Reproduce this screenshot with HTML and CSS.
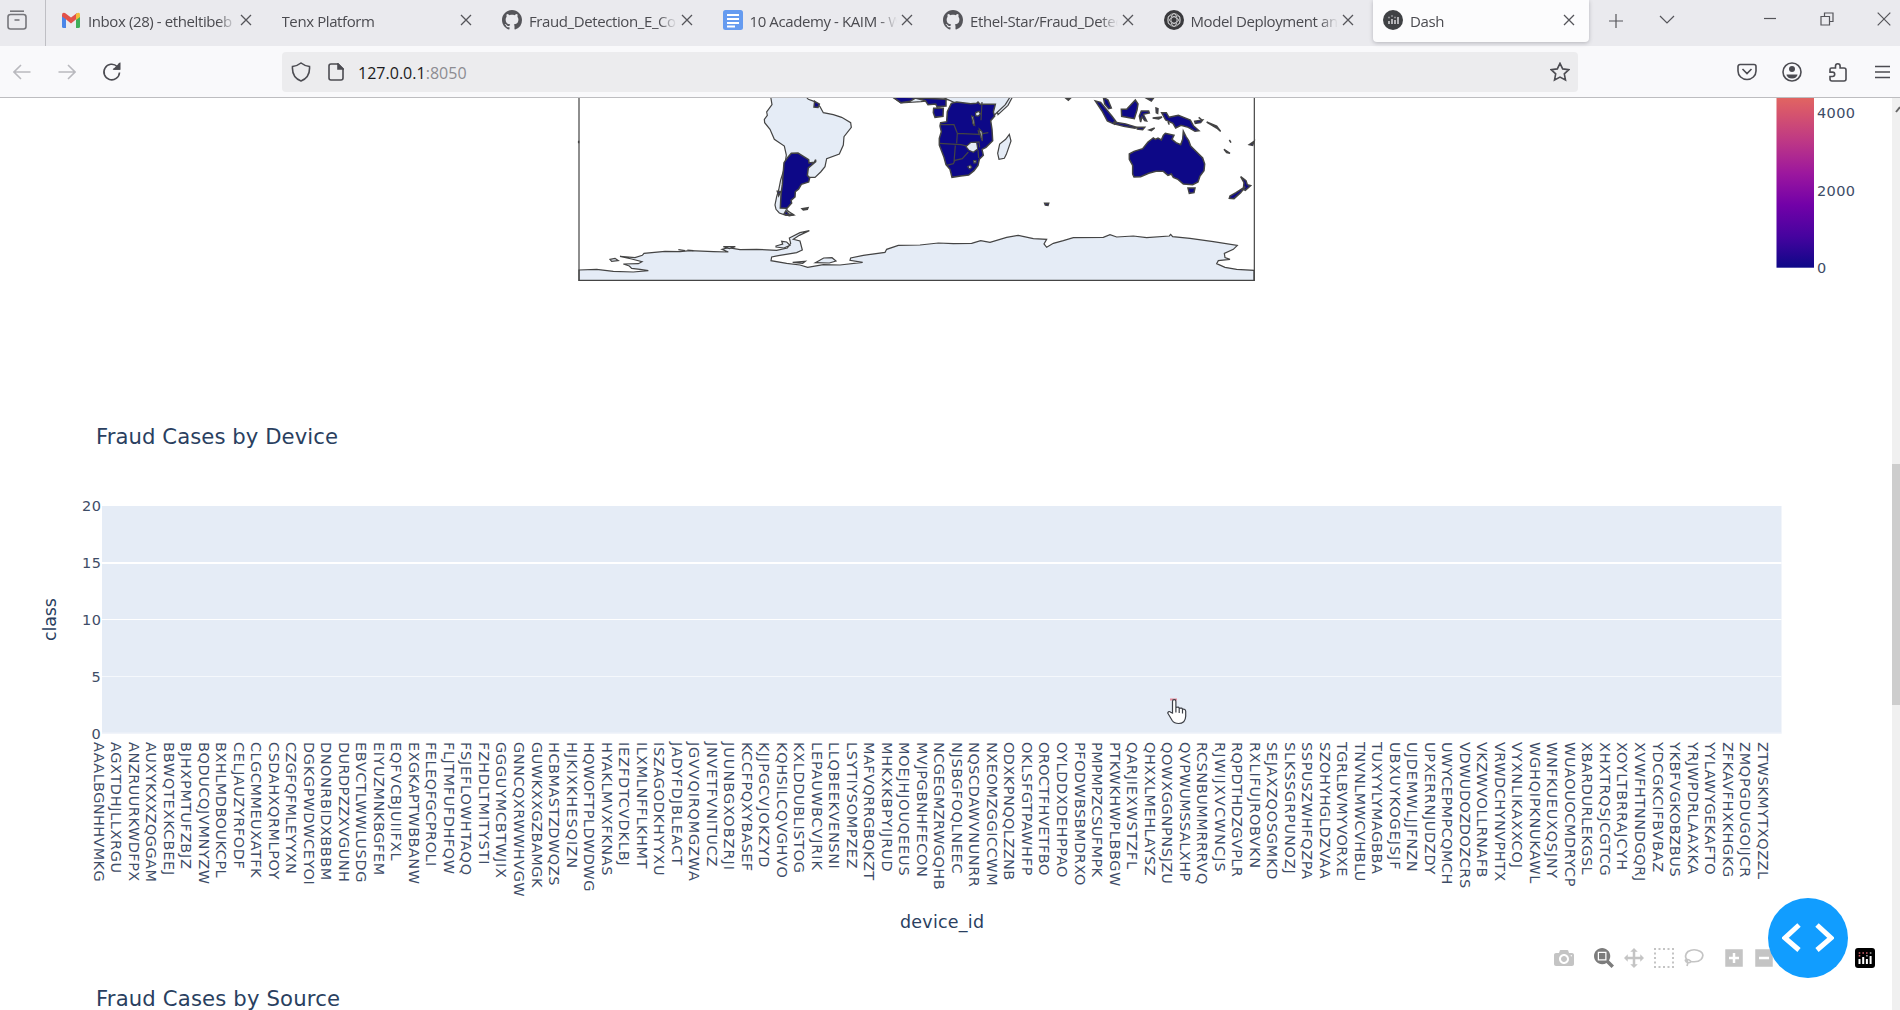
FILE: index.html
```html
<!DOCTYPE html>
<html lang="en">
<head>
<meta charset="utf-8">
<title>Dash</title>
<link rel="stylesheet" href="styles.css">
</head>
<body>
<svg width="0" height="0" class="defs">
  <symbol id="close" viewBox="0 0 12 12"><path d="M1 1l10 10M11 1L1 11" stroke="currentColor" stroke-width="1.3" fill="none"/></symbol>
  <symbol id="github" viewBox="0 0 16 16"><path fill="#55555a" d="M8 0C3.58 0 0 3.58 0 8c0 3.54 2.29 6.53 5.47 7.59.4.07.55-.17.55-.38 0-.19-.01-.82-.01-1.49-2.01.37-2.53-.49-2.69-.94-.09-.23-.48-.94-.82-1.13-.28-.15-.68-.52-.01-.53.63-.01 1.08.58 1.23.82.72 1.21 1.87.87 2.33.66.07-.52.28-.87.51-1.07-1.78-.2-3.64-.89-3.64-3.95 0-.87.31-1.59.82-2.15-.08-.2-.36-1.02.08-2.12 0 0 .67-.21 2.2.82.64-.18 1.32-.27 2-.27s1.36.09 2 .27c1.53-1.04 2.2-.82 2.2-.82.44 1.1.16 1.92.08 2.12.51.56.82 1.27.82 2.15 0 3.07-1.87 3.75-3.65 3.95.29.25.54.73.54 1.48 0 1.07-.01 1.93-.01 2.2 0 .21.15.46.55.38A8.01 8.01 0 0016 8c0-4.42-3.58-8-8-8z"/></symbol>
</svg>

<header class="browser">
  <div class="tabbar">
    <div class="recent">
      <svg width="20" height="20" viewBox="0 0 20 20" fill="none" stroke="#76767b" stroke-width="1.6"><path d="M3 1.2h14"/><rect x="1" y="4.5" width="18" height="14.5" rx="2.5"/><path d="M7.5 10h5"/></svg>
    </div>
    <div class="tab">
      <svg class="favicon" viewBox="0 0 20 20"><path fill="#4a86e8" d="M1 5l4 3v10H2.5Q1 18 1 16.500z"/><path fill="#3fae5a" d="M19 5l-4 3v10h2.500Q19 18 19 16.500z"/><path fill="#e2524a" d="M1 5q0-3 3-2l6 4.500L16 3v5.500l-6 5-6-5-3-2z"/><path fill="#f2bd3b" d="M15 4q4-3 4 1v2l-4 3z"/></svg>
      <span class="label">Inbox (28) - etheltibeb</span><svg class="x"><use href="#close"/></svg>
    </div>
    <div class="tab">
      <span class="label">Tenx Platform</span><svg class="x"><use href="#close"/></svg>
    </div>
    <div class="tab">
      <svg class="favicon"><use href="#github"/></svg>
      <span class="label">Fraud_Detection_E_Co</span><svg class="x"><use href="#close"/></svg>
    </div>
    <div class="tab">
      <svg class="favicon" viewBox="0 0 20 20"><rect width="20" height="20" rx="2.5" fill="#659bf0"/><path d="M4 5h12M4 9h12M4 13h12M4 16.500h8" stroke="#fff" stroke-width="1.800"/></svg>
      <span class="label">10 Academy - KAIM - W</span><svg class="x"><use href="#close"/></svg>
    </div>
    <div class="tab">
      <svg class="favicon"><use href="#github"/></svg>
      <span class="label">Ethel-Star/Fraud_Detec</span><svg class="x"><use href="#close"/></svg>
    </div>
    <div class="tab">
      <svg class="favicon" viewBox="0 0 20 20"><circle cx="10" cy="10" r="10" fill="#3a3a3d"/><g fill="none" stroke="#c9c9cb" stroke-width=".9"><ellipse cx="10" cy="10" rx="3" ry="6.500"/><ellipse cx="10" cy="10" rx="3" ry="6.500" transform="rotate(60 10 10)"/><ellipse cx="10" cy="10" rx="3" ry="6.500" transform="rotate(120 10 10)"/><circle cx="10" cy="10" r="6.300"/></g></svg>
      <span class="label">Model Deployment an</span><svg class="x"><use href="#close"/></svg>
    </div>
    <div class="tab active">
      <svg class="favicon" viewBox="0 0 20 20"><circle cx="10" cy="10" r="10" fill="#3f4144"/><path d="M6 14v-3M9 14V9M12 14v-4M15 14V7" stroke="#c7c7ca" stroke-width="1.700"/><path d="M5 7.500h2M8 6h2M11 7.500h2" stroke="#8f8f93" stroke-width="1.500"/></svg>
      <span class="label">Dash</span><svg class="x"><use href="#close"/></svg>
    </div>
    <svg class="winbtn plus" width="16" height="16" viewBox="0 0 16 16"><path d="M8 1v14M1 8h14"/></svg>
    <svg class="winbtn chevron" width="16" height="10" viewBox="0 0 16 10"><path d="M1 1l7 7 7-7"/></svg>
    <svg class="winbtn minimize" width="12" height="12" viewBox="0 0 12 12"><path d="M0 5.500h12"/></svg>
    <svg class="winbtn restore" width="14" height="14" viewBox="0 0 14 14"><path d="M1 4.500h8.500V13H1zM4.500 4V1H13v8.500H10"/></svg>
    <svg class="winbtn quit" width="14" height="14" viewBox="0 0 14 14"><path d="M.7.7l12.600 12.600M13.300.7L.7 13.300"/></svg>
  </div>

  <div class="navbar">
    <svg class="nav off" width="18" height="16" viewBox="0 0 18 16"><path d="M17.500 8H1M8 1L1 8l7 7"/></svg>
    <svg class="nav off fwd" width="18" height="16" viewBox="0 0 18 16"><path d="M.5 8H17M10 1l7 7-7 7"/></svg>
    <svg class="nav reload" width="20" height="20" viewBox="0 0 20 20"><path d="M17.500 10.500a7.800 7.800 0 1 1-2.300-6M17.500 1v6h-6"/><path d="M17.500 2v5h-5z" fill="#4c4c52"/></svg>
    <div class="url">
      <svg width="20" height="20" viewBox="0 0 20 20"><path d="M10 1c2.500 2 5 3 8.500 3.500C19 11 16 16.500 10 19 4 16.500 1 11 1.500 4.500 5 4 7.500 3 10 1z"/></svg>
      <svg class="doc" width="16" height="18" viewBox="0 0 16 18"><path d="M3 1h7l5 5v9a2 2 0 0 1-2 2H3a2 2 0 0 1-2-2V3a2 2 0 0 1 2-2z"/><path d="M10 1v5h5z" fill="#4c4c52"/></svg>
      <span class="address">127.0.0.1<i>:8050</i></span>
      <svg class="star" width="20" height="20" viewBox="0 0 20 20"><path d="M10 1.300l2.700 5.600 6.100.8-4.500 4.200 1.200 6.100L10 15.100 4.500 18l1.200-6.100L1.200 7.700l6.100-.8z"/></svg>
    </div>
    <svg class="tool" width="20" height="18" viewBox="0 0 20 18"><path d="M3 1.500h14a2 2 0 0 1 2 2V8a9 8.500 0 0 1-18 0V3.500a2 2 0 0 1 2-2zM5.500 6L10 10.500 14.500 6"/></svg>
    <svg class="tool user" width="20" height="20" viewBox="0 0 20 20"><circle cx="10" cy="10" r="9"/><circle cx="10" cy="7" r="3" fill="#4c4c52" stroke="none"/><path d="M4.500 12.500h11a5.500 4 0 0 1-11 0z" fill="#4c4c52" stroke="none"/></svg>
    <svg class="tool puzzle" width="18" height="20" viewBox="0 0 18 20"><path d="M1 7.500Q1 6 2.500 6h4V4a2.300 2.300 0 0 1 4.600 0v2H15q2 0 2 2v9q0 2-2 2H3q-2 0-2-2v-2.500h2.500a2.200 2.200 0 0 0 0-4.400H1z"/></svg>
    <svg class="tool menu" width="15" height="14" viewBox="0 0 15 14"><path d="M0 1.500h15M0 7h15M0 12.500h15"/></svg>
  </div>
</header>

<main class="page">
  <section class="figures">
    <svg class="figure" width="1892" height="300" viewBox="0 98 1892 300">
      <defs>
        <linearGradient id="plasma" gradientUnits="userSpaceOnUse" x1="0" y1="268" x2="0" y2="79">
          <stop offset="0" stop-color="#0d0887"/><stop offset=".1667" stop-color="#46039f"/><stop offset=".3333" stop-color="#7201a8"/>
          <stop offset=".5" stop-color="#9c179e"/><stop offset=".6667" stop-color="#bd3786"/><stop offset=".8333" stop-color="#d8576b"/><stop offset="1" stop-color="#ed7953"/>
        </linearGradient>
      </defs>
      <g class="map" transform="translate(570 90) scale(.33333)">
        <path class="land" d="M27 540L80 538 130 544 190 546 235 542 210 538 185 535 178 528 160 522 205 521 216 515 185 507 150 499 195 503 217 496 222 490 285 484 330 485 360 482 430 485 475 486 456 478 475 473 510 479 560 478 620 481 652 474 662 460 658 444 690 428 718 422 688 436 670 448 690 453 697 480 680 488 625 497 605 501 603 512 650 520 690 525 713 532 760 524 810 525 878 517 840 511 842 504 880 496 945 487 950 478 985 466 1050 465 1105 459 1150 461 1205 460 1232 452 1260 457 1310 442 1345 436 1390 446 1430 448 1422 462 1430 472 1450 460 1480 452 1510 443 1600 442 1620 434 1640 441 1690 438 1730 443 1798 438 1802 433 1808 440 1860 445 1930 455 2002 466 1990 478 1963 490 1965 503 1980 508 1945 512 1940 521 1965 532 2000 538 2052 541V571H27z"/>
        <path class="land" d="M120 508l15-3 10 7-20 2zM736 518l25-14 25-1 12 10-20 6zM668 517l38-3-8 6zM618 468l20-6-3-8 15 2 10 10-18 8-24-3zM460 470l36 0-18 6zM325 479l20 3M352 480l18 2"/>
        <path class="land" d="M602 20L606 44 590 66 592 76 583 88 584 98 600 118 613 148 643 168 649 195 643 235 632 270 626 300 620 320 615 345 618 358 628 369 648 376 672 375 655 364 648 355 640 350 700 270 716 262 735 262 752 246 765 230 770 206 808 192 820 165 822 140 844 112 842 98 815 82 790 74 760 68 750 50 732 34 715 28 708 20z"/>
        <path class="data" d="M664 190l20-1 32 20 1 10 16-2 4-8 0 6-22 19-3 22 7 8-3 12-22 7-8 14-10 8-1 16-12 10 2 8-14 16-20-1 2-40 4-30 5-66 13-18z"/>
        <path class="data" d="M734 34l14 8-4 10-12-1zM648 362l8 10 16 2-14 3-16-5zM696 356l18-3-2 5-12 2zM622 304l10 1-6 12zM583 20h12M26 152v8"/>
        <path class="land" d="M968 22l25 17 60-4 50-5 7 20 20-26 200-8-16 30-30 28-10-40z"/>
        <g transform="translate(990 0)">
          <path class="land" d="M120 18h212l-16 26-36 34-50-10zM328 133l5 20-14 40-6 12-16 3-4-18 6-28 18-14z"/>
          <path class="data" d="M-22 20l24 18 28-4 16-10 30 8 8 12 23-2 4 8 27-2 0-20zM101 55l29 0-1 24-24 3-5-14z"/>
          <path class="data" d="M122 98L140 95 142 65 154 40 170 36 212 41 230 40 234 36 240 43 286 43 280 66 284 78 272 92 276 118 278 152 258 172 246 178 250 196 238 208 234 226 222 242 206 255 182 258 156 262 150 238 138 224 132 202 118 165 118 145 124 125 120 108z"/>
          <path class="borders" d="M120 104l42 0 10 26 66 3M118 160l65 4 18 4 16-10 20-2 2 16M172 130l-2 30M166 166l-4 52M140 226l20-5 5-10 22-5 18-20M246 36l-3 55M217 90l5 18M234 120l4 16M265 128l-28 5M234 180l2 24"/>
          <path class="land" d="M198 170l15-13 17 0 3 20-13 10-13-6zM227 68l10-4 4 8-6 6-8-1zM215 78l5 2 4 26-5-4zM238 117l8 8 1 28-4-10zM203 230l8-4 4 6-6 5zM221 212l7 0 0 6-6 1z"/>
          <path class="data" d="M498 25l12 1-5 5zM434 340l12 0-2 6-8-1zM586 33l16 4 34 42 12 16-4 8-22-10-16-30zM610 22l14 8 10 24-8 2-12-14zM642 96l35 6 34 10-6 3-34-6-30-8zM712 112l22 0-6 7-16-2zM748 120l16-6-10 8zM664 58l16 0 26-28 8 12-3 18-8 26-38-7zM724 63l22 0 2 6-18 4 10 20-6-1-8-12-4 16-4-18zM768 54l6 2-1 14-4-2zM758 84l28-3-10 6zM785 68l14 0 8 14 28-6 36 14 10 18 16 14-12 2-20-12-22-6-16 8-8-14-22-10zM884 94l24-4-6 8-16 2zM896 82l10 8M920 96l30 12 12 16-12-10zM988 150l5 8M972 178l18 12-10-2zM1048 164l14-10-4 12zM740 25h20l-6 8zM804 96l4 8"/>
          <path class="data" d="M688 192L702 184 728 176 744 156 760 144 766 148 774 144 784 150 790 136 796 130 822 136 816 148 828 158 842 164 848 148 850 124 858 140 866 152 872 168 890 186 908 204 914 222 912 242 900 258 894 276 878 284 850 282 834 268 820 262 814 252 804 256 790 244 768 244 746 250 722 260 702 261 698 252 698 226 688 208zM864 294l21 0-3 14-14 2zM1022 260l16 12 4 12 10 3-16 14-6-3 2-20zM1036 290L1022 308 1002 326 988 325 990 318 1008 308z"/>
        </g>
        <path class="frame" d="M27 20V571.500H2053V20"/>
      </g>
      <rect x="1776.500" y="98" width="37.500" height="169.700" fill="url(#plasma)"/>
      <g class="tick"><text x="1817" y="118" textLength="38">4000</text><text x="1817" y="196" textLength="38">2000</text><text x="1817" y="273">0</text></g>
    </svg>

    <svg class="figure" width="1892" height="562" viewBox="0 398 1892 562">
      <text class="title" x="96" y="443.500" textLength="242">Fraud Cases by Device</text>
      <rect x="102" y="506" width="1679.500" height="227.500" fill="#e5ecf6"/>
      <path d="M102 563h1679.500" stroke="#fff" stroke-width="2"/>
      <path d="M102 619.500h1679.500" stroke="#fff"/>
      <path d="M102 676.500h1679.500" stroke="#f5f8fc"/>
      <path d="M102 733h1679.500" stroke="#f0f4fa"/>
      <g class="tick"><text x="82" y="511" textLength="19">20</text><text x="82" y="568" textLength="19">15</text><text x="82" y="625" textLength="19">10</text><text x="91.500" y="682">5</text><text x="91.500" y="739">0</text></g>
      <text class="axis" transform="translate(55.500 641) rotate(-90)" textLength="43">class</text>
      <g class="tick" id="devices"></g>
      <text class="axis" x="900" y="928" textLength="84">device_id</text>
      <path d="M1170 699.500h7" stroke="#e58b9b" stroke-width="2"/>
      <path d="M1172.500 713v-11.500q0-1.800 1.700-1.800t1.700 1.800v6q3-1 3.300.8 3-.8 3.300 1 3-.5 3.200 2v5q0 3-2 5.500-2 1.700-5 1.700-4.500 0-6.500-3l-4.500-7.500q1-2.500 3-.8zM1175.900 707.500v5M1179.200 708.500v4.500M1182.500 709.500v4" fill="#fff" stroke="#3c3f46" stroke-width="1.200"/>
    </svg>

    <svg class="figure" width="1892" height="50" viewBox="0 960 1892 50">
      <text class="title" x="96" y="1006" textLength="244">Fraud Cases by Source</text>
    </svg>

    <div class="modebar">
      <svg viewBox="0 0 1000 1000"><path transform="matrix(1 0 0 -1 0 850)" d="m500 450c-83 0-150-67-150-150 0-83 67-150 150-150 83 0 150 67 150 150 0 83-67 150-150 150z m400 150h-120c-16 0-34 13-39 29l-31 93c-6 15-23 28-40 28h-340c-16 0-34-13-39-28l-31-94c-6-15-23-28-40-28h-120c-55 0-100-45-100-100v-450c0-55 45-100 100-100h800c55 0 100 45 100 100v450c0 55-45 100-100 100z m-400-550c-138 0-250 112-250 250 0 138 112 250 250 250 138 0 250-112 250-250 0-138-112-250-250-250z m365 380c-19 0-35 16-35 35 0 19 16 35 35 35 19 0 35-16 35-35 0-19-16-35-35-35z"/></svg>
      <svg class="group on" viewBox="0 0 1000 1000"><path transform="matrix(1 0 0 -1 0 850)" d="m1000-25l-250 251c40 63 63 138 63 218 0 224-182 406-407 406-224 0-406-182-406-406s183-406 407-406c80 0 155 22 218 62l250-250 125 125z m-812 250l0 438 437 0 0-438-437 0z m62 375l313 0 0-312-313 0 0 312z"/></svg>
      <svg viewBox="0 0 1000 1000"><path transform="matrix(1 0 0 -1 0 850)" d="m1000 350l-187 188 0-125-250 0 0 250 125 0-188 187-187-187 125 0 0-250-250 0 0 125-188-188 186-187 0 125 252 0 0-250-125 0 187-188 188 188-125 0 0 250 250 0 0-126 187 188z"/></svg>
      <svg viewBox="0 0 20 20"><path fill="none" stroke="#c4c4c4" stroke-width="2" stroke-dasharray="2 2.500" d="M0 1h20M0 19h20M1 0v20M19 0v20"/></svg>
      <svg viewBox="0 0 20 20"><path fill="none" stroke="#c4c4c4" stroke-width="1.700" d="M7 13.500Q5 16 2 13.500.5 12 2.500 11.300 5 11 7 13.500q7 1 10-2 4-5-.5-8Q10 0 4 3.500 0 7 2.500 11.300 4.500 14 3 18"/></svg>
      <svg class="group" viewBox="0 0 875 1000"><path transform="matrix(1 0 0 -1 0 850)" d="m1 787l0-875 875 0 0 875-875 0z m687-500l-187 0 0-187-125 0 0 187-188 0 0 125 188 0 0 187 125 0 0-187 187 0 0-125z"/></svg>
      <svg viewBox="0 0 875 1000"><path transform="matrix(1 0 0 -1 0 850)" d="m0 788l0-876 875 0 0 876-875 0z m688-500l-500 0 0 125 500 0 0-125z"/></svg>
      <svg class="brand" viewBox="0 0 20 20"><rect width="20" height="20" rx="3" fill="#000"/><path stroke="#fff" stroke-width="2" d="M4.500 16v-5M8.200 16V9M11.900 16v-5M15.600 16V8"/><path stroke="#cf5f68" stroke-width="1.500" d="M3.700 7.800h1.600M3.700 5h1.600M7.400 5H9M11 5h1.600"/><path stroke="#aaa" stroke-width="1.500" d="M11.100 7.800h1.600M14.800 5h1.600"/></svg>
    </div>
    <div class="debug">
      <svg width="52" height="30" viewBox="0 0 52 30"><path d="M17 2L3 15l14 12M35 2l14 13-14 12" fill="none" stroke="#fff" stroke-width="5"/></svg>
    </div>
  </section>
  <aside class="scrollbar">
    <svg width="8" height="8" viewBox="0 0 8 8"><path d="M4 7l4-5" fill="none" stroke="#666" stroke-width="2"/></svg>
    <div class="thumb"></div>
  </aside>
</main>
<script src="chart.js"></script>
</body>
</html>
```
FILE: styles.css
```css
* { box-sizing: border-box; }
body { margin: 0; width: 1900px; height: 1010px; overflow: hidden; background: #fff; font-family: "Open Sans", "Noto Sans", sans-serif; }
svg { display: block; flex: none; }
.defs { position: absolute; }

.browser { height: 98px; border-bottom: 1px solid #bdbdc0; background: #f9f9fb; }
.tabbar { display: flex; height: 46px; background: #eaeaee; color: #4b4b50; }
.recent { width: 46px; height: 46px; padding: 10px 0 0 7px; border-right: 1px solid #bfbfc4; margin-right: 4px; }
.tab { display: flex; align-items: center; width: 220.500px; height: 42px; padding: 0 19px 3px 11px; }
.favicon { width: 20px; height: 20px; margin-right: 7px; }
.label { flex: 1; overflow: hidden; white-space: nowrap; font-size: 15px; letter-spacing: -.4px; line-height: 24px; padding-top: 2px; mask-image: linear-gradient(90deg, #000 calc(100% - 18px), transparent); }
.x { width: 12px; height: 12px; margin-left: 4px; color: #55555a; }
.active { width: 216px; padding-left: 10px; padding-right: 14px; background: #fcfcfd; border-radius: 0 0 4px 4px; box-shadow: 0 1px 4px #b4b4ba; }
.winbtn { fill: none; stroke: #55555a; stroke-width: 1.200; }
.plus { margin: 13px 0 0 19px; }
.chevron { margin: 15px 0 0 35px; }
.minimize { margin: 13px 0 0 89px; }
.restore { margin: 12px 0 0 44px; }
.quit { margin: 12px 0 0 43px; }

.navbar { display: flex; align-items: center; height: 51px; padding-left: 13px; }
.nav, .tool, .url svg { fill: none; stroke: #4c4c52; stroke-width: 1.600; }
.nav.off { stroke: #b9b9be; }
.fwd { margin-left: 27px; }
.reload { margin-left: 26px; }
.url { display: flex; align-items: center; width: 1296px; height: 40px; margin-left: 160px; padding: 0 8px 0 9px; background: #ececee; border-radius: 4px; }
.doc { margin: 0 14px 0 17px; }
.address { flex: 1; font-size: 16px; line-height: 24px; padding-top: 3px; letter-spacing: .02px; color: #1b1b20; }
.address i { font-style: normal; color: #8c8c92; }
.tool { margin-left: 159px; }
.tool.user { margin-left: 25px; }
.tool.puzzle { margin-left: 27px; }
.tool.menu { margin-left: 28px; }

.page { display: flex; height: 912px; }
.figures { width: 1892px; position: relative; }
.scrollbar { width: 8px; background: #f0f0f0; padding-top: 7px; }
.thumb { height: 241px; margin-top: 351px; background: #cdcdcd; }
.figure text { font-family: "DejaVu Sans", Verdana, sans-serif; fill: #2a3f5f; }
.tick text { font-size: 14.500px; fill: #3e4c66; }
.figure .title { font-size: 21.200px; }
.figure .axis { font-size: 17.500px; }
.map path { vector-effect: non-scaling-stroke; stroke: #444; stroke-width: 1.200; }
.map .land { fill: #e5ecf6; }
.map .data { fill: #0d0887; stroke-width: 1.500; }
.map .borders, .map .frame { fill: none; }

.modebar { position: absolute; left: 1554px; top: 850px; display: flex; gap: 10px; }
.modebar svg { width: 20px; height: 20px; fill: #c4c4c4; }
.modebar .group { margin-left: 10px; }
.modebar .on { fill: #7c7c7c; }
.modebar .brand { margin-left: 71px; }
.debug { position: absolute; left: 1768px; top: 800px; width: 80px; height: 80px; border-radius: 50%; background: #119dff; display: flex; align-items: center; justify-content: center; }
```
FILE: chart.js
```js
// Device ids along the x axis of the device chart.
const ids = `AAALBGNHHVMKG AGXTDHJLLXRGU ANZRUURKWDFPX AUXYKXXZQGGAM BBWQTEXKCBEEJ BJHXPMTUFZBJZ BQDUCQJVMNYZW BXHLMDBOUKCPL
CELJAUZYRFODF CLGCMMEUXATFK CSDAHXQRMLPOY CZGFQFMLEYYXN DGKGPWDWCEYOI DNONRBIDXBBBM DURDPZZXVGUNH EBVCTLWWLUSDG
EIYUZMNKBGFEM EQFVCBJUIIFXL EXGKAPTWBBANW FELEQFGCPROLI FLJTMFUFDHFQW FSJEFLOWHTAQQ FZHDLTMITYSTI GGGUYMCBTWJIX
GNNCQXRWWHVGW GUWKXXGZBAMGK HCBMASTZDWQZS HJKIXKHESQIZN HQWOFTPLDWDWG HYAKLMVXFKNAS IEZFDTCVDKLBJ ILXMLNFFLKHMT
ISZAGODKHYYXU JADYFDJBLEACT JGVVQIRQMGZWA JNVETFVNITUCZ JUUNBGXOBZRJI KCCFPQXYBASEF KJJPGCVJOKZYD KQHSILCQVGHVO
KXLDDUBLISTOG LEPAUWBCVJRIK LLQBEEKVENSNI LSYTIYSOMPZEZ MAFVQRRGBQKZT MHKXKBPYIJRUD MOEJHJOUQEEUS MVJPGBNHFECON
NCGEGMZRWGQHB NJSBGFOQLNEEC NQSCDAWVNUNRR NXEOMZGGICCWM ODXKPNQQLZZNB OKLSFGTPAWHFP OROCTFHVETFBO OYLDDXDEHPPAO
PFODWBSBMDRXO PMPMPZCSUFMPK PTKWKHWPLBBGW QARJIEXWSTZFL QHXXLMEHLAYSZ QOWXGGNPNSJZU QVPWUMSSALXHP RCSNBUMMRRRVQ
RJWIJXVCWNCJS RQPDTHDZGVPLR RXLIFUJROBVKN SEJAXZQOSGMKD SLKSSGRPUNOZJ SSPUSZWHFQZPA SZOHYHGLDZVAA TGRLBVMYVORXE
TNVNLMWCVHBLU TUXYYLYMAGBBA UBXUYKOGEJSJF UJDEMWLJJFNZN UPXERRNJUDZDY UWYCEPMPCQMCH VDWUDOZDOZCRS VKZWVOLLRNAFB
VRWDCHYNVPHTX VYXNLIKAXXCOJ WGHQIPKNUKAWL WNFKUEUXQSJNY WUAOUOCMDRYCP XBARDURLEKGSL XHXTRQSJCGTCG XOYLTBRRAJCYH
XVWFHTNNDGQRJ YDCGKCIFBVBAZ YKBFVGKOBZBUS YRJWPDRLAAXKA YYLAWYGEKAFTO ZFKAVFHXKHGKG ZMQPGDUGOIJCR ZTWSKMYTXQZZL`.split(/\s+/);

// Capital advance widths, A to Z, in thousandths of an em.
const widths = [684, 686, 698, 771, 632, 575, 775, 751, 421, 455, 693, 557, 843, 748, 787, 603, 787, 695, 684, 616, 732, 684, 989, 685, 615, 685];
const group = document.getElementById('devices');
ids.forEach((id, i) => {
  const text = document.createElementNS('http://www.w3.org/2000/svg', 'text');
  const length = [...id].reduce((sum, c) => sum + widths[c.charCodeAt(0) - 65], 0) * 0.015;
  text.setAttribute('transform', `translate(${(93.6 + i * 17.516).toFixed(2)} 742) rotate(90)`);
  text.setAttribute('textLength', length.toFixed(1));
  text.textContent = id;
  group.appendChild(text);
});
```
